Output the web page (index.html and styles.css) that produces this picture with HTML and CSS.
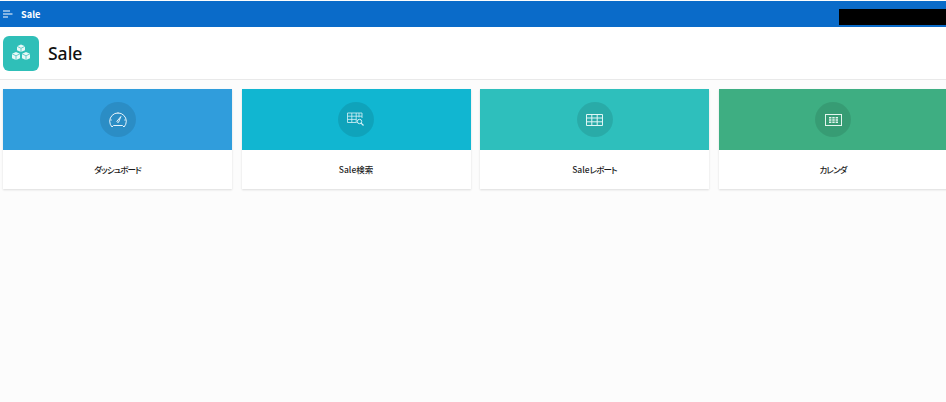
FILE: index.html
```html
<!DOCTYPE html>
<html lang="ja">
<head>
<meta charset="utf-8">
<title>Sale</title>
<link rel="stylesheet" href="styles.css">
</head>
<body>
<header class="topbar">
  <div class="topbar-left">
    <svg class="menu-icon" viewBox="0 0 10 9" width="10" height="9"><path d="M0 1h7M0 4h9.500M0 7h5" stroke="#fff" stroke-width="1.100" fill="none"/></svg>
    <span class="app-name">Sale</span>
  </div>
  <div class="redacted"></div>
</header>
<section class="titlebar">
  <div class="app-icon">
    <svg viewBox="0 0 20 18" width="20" height="18" fill="#e8f8f7">
      <path d="M10 0.500l4 1.800v4l-4 1.800-4-1.800v-4z"/>
      <path d="M5 8l4 1.800v4.400l-4 1.800-4-1.800V9.800z"/>
      <path d="M15 8l4 1.800v4.400l-4 1.800-4-1.800V9.800z"/>
      <path d="M10 4.500v3.600M5 12v4M15 12v4M1 9.800l4 2 4-2M11 9.800l4 2 4-2M6 2.300l4 2 4-2" stroke="#2fbfb8" stroke-width=".7" fill="none"/>
    </svg>
  </div>
  <h1 class="page-title">Sale</h1>
</section>
<main class="cards">
  <a class="card">
    <div class="card-top blue"><span class="circle">
      <svg viewBox="0 0 18 17" width="18" height="17" fill="none" stroke="#e6f3fb" stroke-width="1"><path d="M4.500 14.500h9l1.500 1.500A8.300 8.300 0 1 0 3 16z"/><path d="M7.900 10.300l4-4.800-2.400 5.800a1.100 1.100 0 0 1-1.600-1z"/><path d="M9 1.500v1.200M1.500 9h1.200M16.500 9h-1.200"/></svg>
    </span></div>
    <div class="card-label"><span class="kana">ダッシュボード</span></div>
  </a>
  <a class="card">
    <div class="card-top cyan"><span class="circle">
      <svg viewBox="0 0 18 15" width="18" height="15" fill="none" stroke="#d8f3f8" stroke-width=".8"><path d="M9.500 10.500H.5V1h14.500v5M.5 4.200h14.500M.5 7.400h9M4.800 1v9.500M9.200 1v9.500M12 1v4.500"/><circle cx="12.500" cy="9.500" r="2.200" stroke-width="1"/><path d="M14.100 11.100l2.400 2.400" stroke-width="1.200"/></svg>
    </span></div>
    <div class="card-label">Sale検索</div>
  </a>
  <a class="card">
    <div class="card-top teal"><span class="circle">
      <svg viewBox="0 0 17 12" width="17" height="12" fill="none" stroke="#dff6f5" stroke-width="1"><path d="M.5.500h16v11H.5zM.5 4h16M.5 7.800h16M5.800.500v11M11.200.500v11"/></svg>
    </span></div>
    <div class="card-label">Sale<span class="kana">レポート</span></div>
  </a>
  <a class="card">
    <div class="card-top green"><span class="circle">
      <svg viewBox="0 0 17 12" width="17" height="12" fill="#e4f5ee" stroke="none"><path d="M0 0h17v12H0zM1 1v10h15V1z" fill-rule="evenodd"/><path d="M4 3h2.400v1.500H4zM7.300 3h2.400v1.500H7.300zM10.600 3h2.400v1.500h-2.400zM4 5.300h2.400v1.500H4zM7.300 5.300h2.400v1.500H7.300zM10.600 5.300h2.400v1.500h-2.400zM4 7.600h2.400v1.500H4zM7.300 7.600h2.400v1.500H7.300zM10.600 7.600h2.400v1.500h-2.400z"/></svg>
    </span></div>
    <div class="card-label"><span class="kana">カレンダ</span></div>
  </a>
</main>
</body>
</html>
```
FILE: styles.css
```css
html, body {
  margin: 0;
  height: 100%;
}
body {
  width: 946px;
  height: 402px;
  overflow: hidden;
  background: #fcfcfc;
  font-family: "Noto Sans CJK JP", "Noto Sans", "Open Sans", sans-serif;
  color: #1c1c1c;
}
.topbar {
  height: 26px;
  margin-top: 1px;
  background: #0a6bc9;
  display: flex;
  align-items: center;
  justify-content: space-between;
}
.topbar-left {
  display: flex;
  align-items: center;
}
.menu-icon {
  margin: 0 0 0 3px;
}
.app-name {
  margin-left: 8px;
  font-size: 9.200px;
  font-weight: 700;
  color: #fff;
}
.redacted {
  width: 107px;
  height: 16px;
  background: #000;
  align-self: flex-end;
  margin-bottom: 2px;
}
.titlebar {
  height: 53px;
  box-sizing: border-box;
  background: #fff;
  border-bottom: 1px solid #e9e9e9;
  display: flex;
  align-items: center;
  padding-left: 3px;
}
.app-icon {
  width: 36px;
  height: 35px;
  border-radius: 6px;
  background: #2fbfb8;
  display: flex;
  align-items: center;
  justify-content: center;
}
.page-title {
  margin: 0 0 0 9px;
  font-family: "Noto Sans", "Open Sans", sans-serif;
  font-size: 17.500px;
  font-weight: 500;
  color: #111;
}
.cards {
  display: grid;
  grid-template-columns: repeat(4, 229px);
  column-gap: 9.500px;
  padding: 9px 0 0 3px;
}
.card {
  height: 100px;
  background: #fff;
  box-shadow: 0 1px 2px rgba(0, 0, 0, .13);
  display: flex;
  flex-direction: column;
}
.card-top {
  height: 61px;
  display: flex;
  align-items: center;
  justify-content: center;
}
.blue { background: #309ddc; }
.cyan { background: #11b6d1; }
.teal { background: #2ebfbc; }
.green { background: #3eae82; }
.circle {
  width: 36px;
  height: 35px;
  border-radius: 50%;
  background: rgba(0, 0, 0, .1);
  display: flex;
  align-items: center;
  justify-content: center;
}
.card-label {
  flex: 1;
  display: flex;
  align-items: center;
  justify-content: center;
  padding-bottom: 2px;
  font-size: 8.500px;
  font-weight: 500;
  font-feature-settings: "palt";
  color: #1c1c1c;
}
.kana {
  letter-spacing: -.85px;
}
```
